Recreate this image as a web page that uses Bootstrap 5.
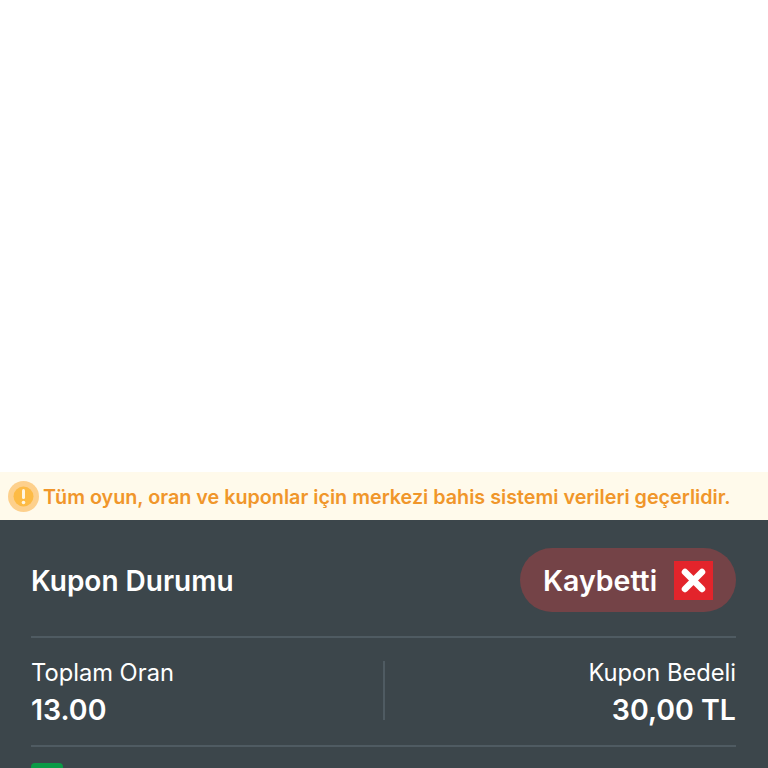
<!DOCTYPE html>
<html lang="tr">
<head>
    <meta charset="UTF-8">
    <title>Kupon Durumu</title>
    <link href="https://cdn.jsdelivr.net/npm/bootstrap@5.3.0/dist/css/bootstrap.min.css" rel="stylesheet">
    <style>
        html, body {
            height: 768px;
            overflow: hidden;
        }
        body {
            font-family: Inter, "Liberation Sans", sans-serif;
            background-color: #fff;
        }
        .top-space {
            height: 472px;
        }
        .notice-bar {
            height: 48px;
            padding-left: 8px;
            background-color: #fffaeb;
            color: #f0962a;
            font-size: 19.75px;
            font-weight: 600;
            white-space: nowrap;
        }
        .notice-text {
            padding-top: 3px;
        }
        .notice-icon {
            width: 31px;
            height: 31px;
            margin-right: 4px;
        }
        .coupon-panel {
            height: 248px;
            padding: 28px 32px 0 31px;
            background-color: #3c464b;
            color: #fff;
        }
        .status-row {
            height: 64px;
        }
        .status-title {
            padding-top: 2px;
            font-size: 28px;
            font-weight: 600;
        }
        .status-pill {
            width: 216px;
            height: 64px;
            padding: 0 23px;
            background-color: #744347;
            border-radius: 32px;
            font-size: 28.5px;
            font-weight: 600;
        }
        .status-word {
            padding-top: 2px;
        }
        .status-x {
            width: 39px;
            height: 39px;
            background-color: #e3242b;
        }
        .panel-line {
            height: 2px;
            background-color: #4f5b62;
        }
        .line-one {
            margin-top: 24px;
        }
        .totals-row {
            height: 107px;
        }
        .totals-label {
            font-size: 23.7px;
            line-height: 30px;
        }
        .totals-value {
            margin-top: 6px;
            font-size: 28.5px;
            line-height: 32px;
            font-weight: 600;
        }
        .totals-split {
            width: 2px;
            height: 59px;
            margin-bottom: 2px;
            background-color: #4f5b62;
        }
        .totals-cell {
            width: 50%;
        }
        .match-box {
            width: 32px;
            height: 32px;
            margin-top: 16px;
            background-color: #0b9a46;
            border-radius: 4px;
        }
    </style>
</head>
<body>
<div class="top-space"></div>
<div class="notice-bar d-flex align-items-center">
    <svg class="notice-icon flex-shrink-0" viewBox="0 0 31 31">
        <circle cx="15.5" cy="15.5" r="15.5" fill="#fdd08c"/>
        <circle cx="15.5" cy="15.5" r="10" fill="#fdbb45"/>
        <rect x="14" y="8" width="3" height="10" rx="1.5" fill="#fff6e2"/>
        <circle cx="15.5" cy="21.5" r="1.8" fill="#fff6e2"/>
    </svg>
    <span class="notice-text">Tüm oyun, oran ve kuponlar için merkezi bahis sistemi verileri geçerlidir.</span>
</div>
<div class="coupon-panel">
    <div class="status-row d-flex align-items-center justify-content-between">
        <div class="status-title">Kupon Durumu</div>
        <div class="status-pill d-flex align-items-center justify-content-between">
            <span class="status-word">Kaybetti</span>
            <span class="status-x d-flex align-items-center justify-content-center">
                <svg width="27" height="27" viewBox="0 0 27 27">
                    <path d="M5 5 22 22M22 5 5 22" stroke="#fff" stroke-width="6.5" stroke-linecap="round" fill="none"/>
                </svg>
            </span>
        </div>
    </div>
    <div class="panel-line line-one"></div>
    <div class="totals-row d-flex align-items-center">
        <div class="totals-cell">
            <div class="totals-label">Toplam Oran</div>
            <div class="totals-value">13.00</div>
        </div>
        <div class="totals-split flex-shrink-0"></div>
        <div class="totals-cell text-end">
            <div class="totals-label">Kupon Bedeli</div>
            <div class="totals-value">30,00 TL</div>
        </div>
    </div>
    <div class="panel-line"></div>
    <div class="match-box"></div>
</div>
<script src="https://cdn.jsdelivr.net/npm/bootstrap@5.3.0/dist/js/bootstrap.bundle.min.js"></script>
</body>
</html>
